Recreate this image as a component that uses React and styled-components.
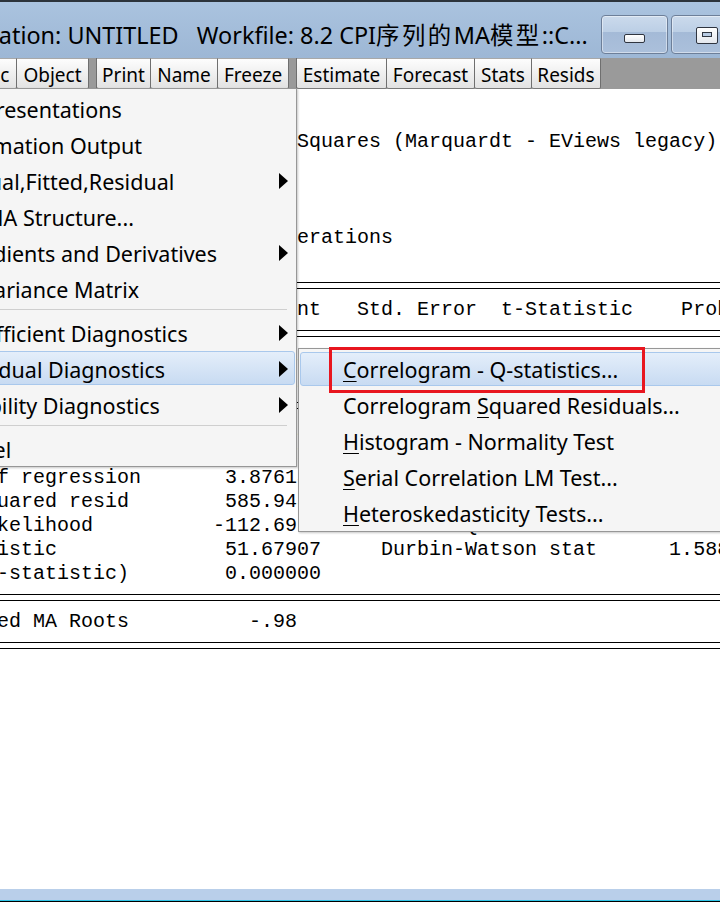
import React from 'react';
import styled, { createGlobalStyle } from 'styled-components';

const UI = `"Noto Sans", "Open Sans", "Noto Sans CJK SC", sans-serif`;
const MONO = `"Liberation Mono", "DejaVu Sans Mono", monospace`;

const GlobalStyle = createGlobalStyle`
  html, body { margin: 0; padding: 0; background: #fff; }
  body { width: 720px; height: 902px; overflow: hidden; }
`;

// builds a fixed-column text row: at(col, text, col, text, ...)
const at = (...parts) => {
  let s = '';
  for (let i = 0; i < parts.length; i += 2) s = s.padEnd(parts[i]) + parts[i + 1];
  return s;
};

const OUTPUT = [
  { t: 'Dependent Variable: CPI' },
  { t: 'Method: ARMA Conditional Least Squares (Marquardt - EViews legacy)' },
  { t: 'Date: 05/18/21   Time: 15:42' },
  { t: 'Sample: 1 30' },
  { t: 'Included observations: 30' },
  { t: 'Convergence achieved after 7 iterations' },
  { t: 'MA Backcast: 0' },
  { rule: true },
  { t: at(6, 'Variable', 22, 'Coefficient', 36, 'Std. Error', 48, 't-Statistic', 63, 'Prob.') },
  { rule: true },
  { t: at(12, 'C', 25, '101.9537', 37, '0.723081', 50, '140.9982', 64, '0.0000') },
  { t: at(8, 'MA(1)', 25, '0.981226', 37, '0.020456', 50, '47.96801', 64, '0.0000') },
  { rule: true },
  { t: at(0, 'R-squared', 25, '0.656823', 38, 'Mean dependent var', 62, '101.8967') },
  { t: at(0, 'Adjusted R-squared', 25, '0.644113', 38, 'S.D. dependent var', 62, '6.497562') },
  { t: at(0, 'S.E. of regression', 25, '3.876133', 38, 'Akaike info criterion', 62, '5.635167') },
  { t: at(0, 'Sum squared resid', 25, '585.9430', 38, 'Schwarz criterion', 62, '5.728580') },
  { t: at(0, 'Log likelihood', 24, '-112.6951', 38, 'Hannan-Quinn criter.', 62, '5.665237') },
  { t: at(0, 'F-statistic', 25, '51.67907', 38, 'Durbin-Watson stat', 62, '1.588374') },
  { t: at(0, 'Prob(F-statistic)', 25, '0.000000') },
  { rule: true },
  { t: at(0, 'Inverted MA Roots', 27, '-.98') },
  { rule: true },
];

const TOOL_GROUPS = [
  [{ label: 'View', w: 58 }, { label: 'Proc', w: 54 }, { label: 'Object', w: 72 }],
  [{ label: 'Print', w: 54 }, { label: 'Name', w: 67 }, { label: 'Freeze', w: 71 }],
  [{ label: 'Estimate', w: 90 }, { label: 'Forecast', w: 88 }, { label: 'Stats', w: 57 }, { label: 'Resids', w: 69 }],
];

const VIEW_MENU = [
  { label: 'Representations' },
  { label: 'Estimation Output' },
  { label: 'Actual,Fitted,Residual', sub: true },
  { label: 'ARMA Structure...' },
  { label: 'Gradients and Derivatives', sub: true },
  { label: 'Covariance Matrix' },
  { sep: true },
  { label: 'Coefficient Diagnostics', sub: true },
  { label: 'Residual Diagnostics', sub: true, active: true },
  { label: 'Stability Diagnostics', sub: true },
  { sep: true },
  { label: 'Label' },
];

const RESID_MENU = [
  { pre: '', key: 'C', rest: 'orrelogram - Q-statistics...', active: true },
  { pre: 'Correlogram ', key: 'S', rest: 'quared Residuals...' },
  { pre: '', key: 'H', rest: 'istogram - Normality Test' },
  { pre: '', key: 'S', rest: 'erial Correlation LM Test...' },
  { pre: '', key: 'H', rest: 'eteroskedasticity Tests...' },
];

const Window = styled.div`
  position: relative;
  width: 720px;
  height: 902px;
  overflow: hidden;
  display: flex;
  flex-direction: column;
  background: #fff;
`;

const TitleBar = styled.div`
  flex: 0 0 56px;
  display: flex;
  align-items: flex-start;
  border-top: 2px solid #2c333b;
  background: linear-gradient(#aac3df, #9db7d5);
`;

const TitleText = styled.div`
  flex: 1;
  margin-left: -43px;
  padding-top: 16px;
  font-family: ${UI};
  font-size: 23.4px;
  line-height: 34px;
  color: #000;
  white-space: pre;
`;

const Wide = styled.span`
  letter-spacing: 2.5px;
`;

const CaptionButtons = styled.div`
  display: flex;
  gap: 3px;
  margin-top: 13px;
  margin-right: -18px;
  flex-shrink: 0;
`;

const CaptionButton = styled.div`
  width: 67px;
  height: 39px;
  box-sizing: border-box;
  border: 1px solid #6d7f99;
  border-radius: 4px;
  display: flex;
  justify-content: center;
  align-items: ${(p) => (p.$max ? 'flex-start' : 'flex-end')};
  padding: ${(p) => (p.$max ? '11px 0 0 4px' : '0 0 10px')};
  background: linear-gradient(#cbdaec 0%, #bccfe5 42%, #a4bad7 44%, #abc0db 100%);
  box-shadow: inset 0 0 0 1px rgba(255, 255, 255, 0.45);
`;

const MinGlyph = styled.span`
  width: 21px;
  height: 9px;
  box-sizing: border-box;
  border: 1px solid #2f3540;
  border-radius: 2px;
  background: linear-gradient(#ffffff, #e4e8ee);
`;

const MaxGlyph = styled.span`
  width: 22px;
  height: 17px;
  box-sizing: border-box;
  border: 1px solid #2f3540;
  border-radius: 2px;
  background: linear-gradient(#ffffff, #e4e8ee);
  display: flex;
  justify-content: center;
  padding-top: 4px;
  &::after {
    content: '';
    width: 10px;
    height: 5px;
    box-sizing: border-box;
    border: 1px solid #2f3540;
    background: #b8cbe3;
  }
`;

const Toolbar = styled.div`
  flex: 0 0 31px;
  display: flex;
  margin-left: -96px;
  background: #9a9a9a;
`;

const ToolGroup = styled.div`
  display: flex;
  margin-left: ${(p) => (p.$first ? 0 : 7)}px;
  border-left: 1px solid #6f6f6f;
`;

const ToolButton = styled.div`
  width: ${(p) => p.$w}px;
  height: 31px;
  box-sizing: border-box;
  padding-top: 3px;
  border-right: 1px solid #6f6f6f;
  border-top: 1px solid #a8a8a8;
  border-bottom: 1px solid #7a7a7a;
  border-radius: 0 0 2px 2px;
  background: linear-gradient(#fdfdfd, #e2e2e2);
  font-family: ${UI};
  font-size: 19px;
  line-height: 26px;
  color: #000;
  text-align: center;
  white-space: nowrap;
`;

const Content = styled.div`
  position: relative;
  flex: 1;
  background: #fff;
`;

const Output = styled.div`
  width: 900px;
  margin-left: -75px;
  padding-top: 17px;
`;

const Line = styled.div`
  height: 24px;
  font-family: ${MONO};
  font-size: 20px;
  line-height: 24px;
  color: #000;
  white-space: pre;
`;

const DoubleRule = styled.div`
  height: 24px;
  box-sizing: border-box;
  padding-top: 8px;
  &::before {
    content: '';
    display: block;
    height: 5px;
    border-top: 1px solid #000;
    border-bottom: 1px solid #000;
  }
`;

const Menu = styled.div`
  position: absolute;
  left: ${(p) => p.$left}px;
  top: ${(p) => p.$top}px;
  width: ${(p) => p.$width}px;
  box-sizing: border-box;
  padding: ${(p) => p.$pad};
  border: 1px solid #979797;
  background: #f5f5f5;
  box-shadow: 1px 1px 2px rgba(0, 0, 0, 0.22);
  font-family: ${UI};
  font-size: 21.5px;
  color: #000;
`;

const MenuItem = styled.div`
  position: relative;
  height: 36px;
  display: flex;
  align-items: center;
  padding-left: ${(p) => p.$indent}px;
  padding-top: ${(p) => p.$lift}px;
  box-sizing: border-box;
  white-space: pre;
  &::before {
    content: '';
    display: ${(p) => (p.$active ? 'block' : 'none')};
    position: absolute;
    left: 1px;
    right: 1px;
    top: 1px;
    bottom: 1px;
    border: 1px solid #a9c8ec;
    border-radius: 3px;
    background: linear-gradient(#e4eefa, #c8dbf2);
  }
`;

const ItemText = styled.span`
  position: relative;
  line-height: 30px;
`;

const Arrow = styled.span`
  position: absolute;
  right: 8px;
  top: 11px;
  width: 0;
  height: 0;
  border-top: 8px solid transparent;
  border-bottom: 8px solid transparent;
  border-left: 9px solid #000;
`;

const Separator = styled.div`
  height: 8px;
  box-sizing: border-box;
  padding-top: 3px;
  margin-right: 9px;
  &::before {
    content: '';
    display: block;
    border-top: 1px solid #cfcfcf;
  }
`;

const Key = styled.span`
  text-decoration: underline;
  text-underline-offset: 3px;
  text-decoration-thickness: 1px;
`;

const Callout = styled.div`
  position: absolute;
  left: 329px;
  top: 258px;
  width: 316px;
  height: 46px;
  box-sizing: border-box;
  border: 3px solid #e8161f;
`;

const BottomFrame = styled.div`
  flex: 0 0 11px;
  background: #b9cfea;
  border-bottom: 1px solid #2fc4e6;
  box-shadow: 0 1px 0 #000;
  margin-bottom: 1px;
`;

export default function App() {
  return (
    <>
      <GlobalStyle />
      <Window>
        <TitleBar>
          <TitleText>
            {'Equation: UNTITLED   Workfile: 8.2 CPI'}
            <Wide>序列的</Wide>
            {'MA'}
            <Wide>模型</Wide>
            {'::C...'}
          </TitleText>
          <CaptionButtons>
            <CaptionButton>
              <MinGlyph />
            </CaptionButton>
            <CaptionButton $max>
              <MaxGlyph />
            </CaptionButton>
          </CaptionButtons>
        </TitleBar>

        <Toolbar>
          {TOOL_GROUPS.map((group, gi) => (
            <ToolGroup key={gi} $first={gi === 0}>
              {group.map((b) => (
                <ToolButton key={b.label} $w={b.w}>
                  {b.label}
                </ToolButton>
              ))}
            </ToolGroup>
          ))}
        </Toolbar>

        <Content>
          <Output>
            {OUTPUT.map((row, i) => (row.rule ? <DoubleRule key={i} /> : <Line key={i}>{row.t}</Line>))}
          </Output>

          <Menu $left={-84} $top={-1} $width={381} $pad="1px 0 0">
            {VIEW_MENU.map((item, i) =>
              item.sep ? (
                <Separator key={i} />
              ) : (
                <MenuItem key={i} $indent={40} $lift={3} $active={item.active}>
                  <ItemText>{item.label}</ItemText>
                  {item.sub && <Arrow />}
                </MenuItem>
              )
            )}
          </Menu>

          <Menu $left={298} $top={259} $width={440} $pad="2px 0 0">
            {RESID_MENU.map((item, i) => (
              <MenuItem key={i} $indent={44} $lift={2} $active={item.active}>
                <ItemText>
                  {item.pre}
                  <Key>{item.key}</Key>
                  {item.rest}
                </ItemText>
              </MenuItem>
            ))}
          </Menu>

          <Callout />
        </Content>

        <BottomFrame />
      </Window>
    </>
  );
}
